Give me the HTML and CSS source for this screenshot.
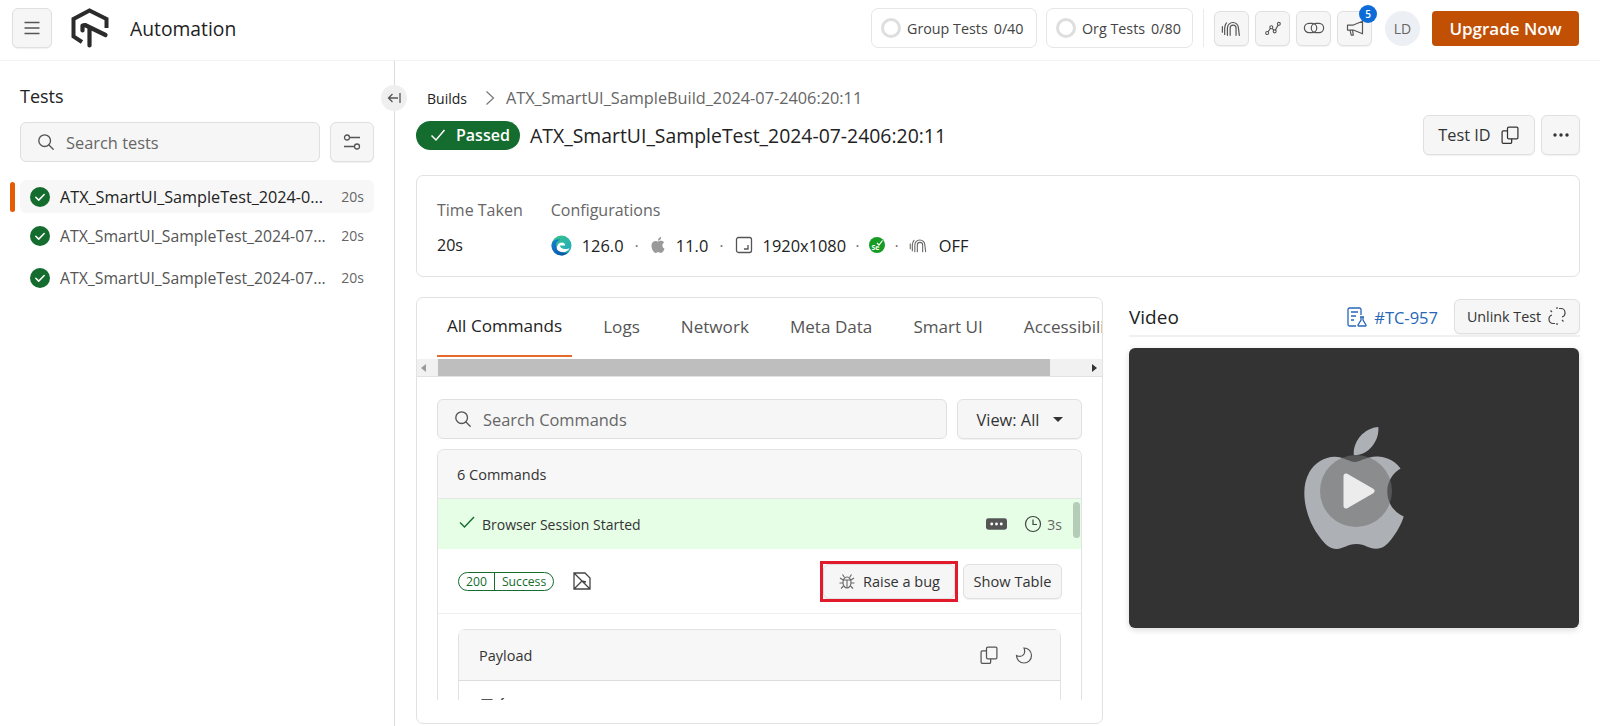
FILE: index.html
```html
<!DOCTYPE html>
<html lang="en">
<head>
<meta charset="utf-8">
<title>Automation</title>
<link rel="stylesheet" href="styles.css">
</head>
<body>
<svg class="defs" width="0" height="0" aria-hidden="true">
  <defs>
    <symbol id="i-tunnel" viewBox="0 0 24 24"><path d="M7 20v-8a6 6 0 0 1 12 0l1 8M10 20v-8a3.200 3.200 0 0 1 6.400 0v8M4 19v-7a9 9 0 0 1 2-5.500M1.500 10.500v6" fill="none" stroke="currentColor" stroke-width="1.300" stroke-linecap="round"/></symbol>
    <symbol id="i-copy" viewBox="0 0 24 24"><rect x="9" y="2.500" width="12.500" height="14" rx="1.500" fill="none" stroke="currentColor" stroke-width="1.500"/><path d="M9 7H4a1.500 1.500 0 0 0-1.500 1.500v12A1.500 1.500 0 0 0 4 22h8.500a1.500 1.500 0 0 0 1.500-1.500v-4" fill="none" stroke="currentColor" stroke-width="1.500"/></symbol>
    <symbol id="i-apple" viewBox="0 0 24 24"><path fill="currentColor" d="M12.152 6.896c-.948 0-2.415-1.078-3.96-1.04-2.04.027-3.91 1.183-4.961 3.014-2.117 3.675-.546 9.103 1.519 12.09 1.013 1.454 2.208 3.09 3.792 3.039 1.52-.065 2.09-.987 3.935-.987 1.831 0 2.35.987 3.96.948 1.637-.026 2.676-1.48 3.676-2.948 1.156-1.688 1.636-3.325 1.662-3.415-.039-.013-3.182-1.221-3.22-4.857-.026-3.04 2.48-4.494 2.597-4.559-1.429-2.09-3.623-2.324-4.39-2.376-2-.156-3.675 1.09-4.61 1.09zM15.530 3.830c.843-1.012 1.400-2.427 1.245-3.830-1.207.052-2.662.805-3.532 1.818-.78.896-1.454 2.338-1.273 3.714 1.338.104 2.715-.688 3.559-1.701"/></symbol>
    <symbol id="i-check" viewBox="0 0 20 20"><circle cx="10" cy="10" r="10" fill="#146c2e"/><path d="M5.800 10.300l2.900 2.800 5.500-5.600" fill="none" stroke="#fff" stroke-width="1.500" stroke-linecap="round" stroke-linejoin="round"/></symbol>
    <symbol id="i-search" viewBox="0 0 20 20"><circle cx="8.500" cy="8.500" r="6.500" fill="none" stroke="currentColor" stroke-width="1.500"/><path d="M13.300 13.300L18 18" fill="none" stroke="currentColor" stroke-width="1.500" stroke-linecap="round"/></symbol>
  </defs>
</svg>

<header class="topbar">
  <button class="btn menu-btn" aria-label="Menu">
    <svg class="ic16" viewBox="0 0 16 16"><path d="M0.500 2.500h15M0.500 8h15M0.500 13.500h15" fill="none" stroke="#555" stroke-width="1.300"/></svg>
  </button>
  <svg class="logo" viewBox="0 0 38 40" aria-label="Logo">
    <path d="M11 34L2.500 28.500V11L18.500 2.500L35.500 11V20" fill="none" stroke="#2b2b2b" stroke-width="4" stroke-linejoin="miter"/>
    <path d="M18.500 37.500V19M11.500 22.500V17.500L14 17L34.500 27" fill="none" stroke="#2b2b2b" stroke-width="4.200" stroke-linecap="round" stroke-linejoin="round"/>
  </svg>
  <span class="app-name">Automation</span>
  <div class="topbar-right">
    <div class="quota quota-group"><span class="ring"></span><span>Group Tests</span><span>0/40</span></div>
    <div class="quota quota-org"><span class="ring"></span><span>Org Tests</span><span>0/80</span></div>
    <span class="vsep"></span>
    <button class="btn tool-btn" aria-label="Tunnel"><svg class="ic22"><use href="#i-tunnel"/></svg></button>
    <button class="btn tool-btn" aria-label="Analytics">
      <svg class="ic20" viewBox="0 0 24 24"><path d="M5 18l5-7 4 5 5-9" fill="none" stroke="#555" stroke-width="1.400"/><circle cx="5" cy="18" r="1.800" fill="#fff" stroke="#555" stroke-width="1.300"/><circle cx="10" cy="11" r="1.800" fill="#fff" stroke="#555" stroke-width="1.300"/><circle cx="14" cy="16" r="1.800" fill="#fff" stroke="#555" stroke-width="1.300"/><circle cx="19" cy="7" r="1.800" fill="#fff" stroke="#555" stroke-width="1.300"/></svg>
    </button>
    <button class="btn tool-btn" aria-label="Integrations">
      <svg class="ic22" viewBox="0 0 24 24"><rect x="1.500" y="7" width="13.500" height="10" rx="5" fill="none" stroke="#555" stroke-width="1.300"/><rect x="9" y="7" width="13.500" height="10" rx="5" fill="none" stroke="#555" stroke-width="1.300"/></svg>
    </button>
    <button class="btn tool-btn notify" aria-label="Announcements">
      <svg class="ic20" viewBox="0 0 24 24"><path d="M3 8.500h7L21 4v15l-11-4.500H3zM6 14.500l1.500 6H10l-1-6" fill="none" stroke="#555" stroke-width="1.400" stroke-linejoin="round"/></svg>
      <span class="badge">5</span>
    </button>
    <span class="avatar">LD</span>
    <button class="upgrade">Upgrade Now</button>
  </div>
</header>

<main class="layout">
  <aside class="sidebar">
    <button class="collapse" aria-label="Collapse">
      <svg viewBox="0 0 14 12" width="14" height="12"><path d="M11 6H1.500M5.500 2L1.500 6l4 4M13 1v10" fill="none" stroke="#555" stroke-width="1.300"/></svg>
    </button>
    <h2 class="side-title">Tests</h2>
    <div class="side-tools">
      <div class="search-box side-search">
        <svg class="ic18"><use href="#i-search"/></svg>
        <span>Search tests</span>
      </div>
      <button class="btn filter-btn" aria-label="Filter">
        <svg class="ic18" viewBox="0 0 18 18"><path d="M7 4.500h10M1 13.500h10" fill="none" stroke="#555" stroke-width="1.300"/><circle cx="4" cy="4.500" r="2.500" fill="none" stroke="#555" stroke-width="1.300"/><circle cx="14" cy="13.500" r="2.500" fill="none" stroke="#555" stroke-width="1.300"/></svg>
      </button>
    </div>
    <ul class="test-list">
      <li class="test-item active"><svg class="ic20"><use href="#i-check"/></svg><span class="test-name">ATX_SmartUI_SampleTest_2024-0...</span><span class="test-time">20s</span></li>
      <li class="test-item"><svg class="ic20"><use href="#i-check"/></svg><span class="test-name">ATX_SmartUI_SampleTest_2024-07...</span><span class="test-time">20s</span></li>
      <li class="test-item"><svg class="ic20"><use href="#i-check"/></svg><span class="test-name">ATX_SmartUI_SampleTest_2024-07...</span><span class="test-time">20s</span></li>
    </ul>
  </aside>

  <section class="content">
    <nav class="crumbs">
      <span class="crumb-root">Builds</span>
      <svg class="crumb-sep" viewBox="0 0 10 16"><path d="M1.500 1.500L8.500 8l-7 6.500" fill="none" stroke="#777" stroke-width="1.200"/></svg>
      <span class="crumb-leaf">ATX_SmartUI_SampleBuild_2024-07-2406:20:11</span>
    </nav>
    <div class="title-row">
      <span class="pill">
        <svg viewBox="0 0 16 14" width="16" height="14"><path d="M1.500 7.500l4.500 4.500L14.500 2" fill="none" stroke="#fff" stroke-width="1.500"/></svg>
        Passed
      </span>
      <h1 class="title">ATX_SmartUI_SampleTest_2024-07-2406:20:11</h1>
      <button class="btn testid-btn">Test ID <svg class="ic20"><use href="#i-copy"/></svg></button>
      <button class="btn more-btn" aria-label="More">
        <svg viewBox="0 0 18 4" width="18" height="4"><circle cx="3" cy="2" r="1.700" fill="#333"/><circle cx="9" cy="2" r="1.700" fill="#333"/><circle cx="15" cy="2" r="1.700" fill="#333"/></svg>
      </button>
    </div>

    <div class="info-card">
      <div class="info-col">
        <span class="info-label">Time Taken</span>
        <span class="info-value">20s</span>
      </div>
      <div class="info-col">
        <span class="info-label">Configurations</span>
        <div class="config">
          <svg class="ic20 cfg-edge" viewBox="0 0 20 20">
            <defs>
              <linearGradient id="edgeA" x1="0" y1="0" x2="1" y2="1"><stop offset="0" stop-color="#39c481"/><stop offset="1" stop-color="#1fa8c9"/></linearGradient>
              <linearGradient id="edgeB" x1="0" y1="0" x2="1" y2="1"><stop offset="0" stop-color="#1783d4"/><stop offset="1" stop-color="#0b4f9e"/></linearGradient>
            </defs>
            <circle cx="10" cy="10" r="9.500" fill="url(#edgeA)"/>
            <path d="M0.500 10C1 5 5 3.500 9 4.500c-4 1-5 4-3.500 7.500 1.500 4 6.500 6 11 4.500-1.800 2-4 3-6.500 3-5.500 0-9.500-4.500-9.500-9.500z" fill="url(#edgeB)"/>
            <path d="M6.500 9.500c1-3 7-3.500 7 .5H8.500c.5 3 4 4.500 9 2.500-1 3.500-7 5-10.500 2.500-2-1.500-2-3.500-.5-5.500z" fill="#fff"/>
          </svg>
          <span>126.0</span><span class="dot">·</span>
          <svg class="ic16 cfg-apple"><use href="#i-apple"/></svg>
          <span>11.0</span><span class="dot">·</span>
          <svg class="ic18" viewBox="0 0 18 18"><rect x="1.500" y="1.500" width="15" height="15" rx="2" fill="none" stroke="#555" stroke-width="1.300"/><path d="M13 9v4H9" fill="none" stroke="#555" stroke-width="1.300"/></svg>
          <span>1920x1080</span><span class="dot dot-tight">·</span>
          <svg class="ic16 cfg-se" viewBox="0 0 16 16"><circle cx="8" cy="8" r="8" fill="#169c25"/><path d="M8 6l2 2 3.500-4.500" fill="none" stroke="#fff" stroke-width="1.200"/><text class="se-mark" x="2.500" y="12.500">Se</text></svg>
          <span class="dot dot-tight">·</span>
          <svg class="ic20 tunnel-gray"><use href="#i-tunnel"/></svg>
          <span>OFF</span>
        </div>
      </div>
    </div>

    <div class="panels">
      <div class="panel-left">
        <div class="tabs">
          <span class="tab active">All Commands</span>
          <span class="tab">Logs</span>
          <span class="tab">Network</span>
          <span class="tab">Meta Data</span>
          <span class="tab">Smart UI</span>
          <span class="tab">Accessibility</span>
        </div>
        <div class="hscroll">
          <span class="arrow-l"></span>
          <span class="thumb"></span>
          <span class="arrow-r"></span>
        </div>
        <div class="panel-body">
          <div class="cmd-tools">
            <div class="search-box cmd-search">
              <svg class="ic18"><use href="#i-search"/></svg>
              <span>Search Commands</span>
            </div>
            <button class="btn view-btn">View: All <span class="caret"></span></button>
          </div>
          <div class="cmd-box">
            <div class="cmd-head">6 Commands</div>
            <div class="cmd-row">
              <svg class="cmd-check" viewBox="0 0 16 12" width="16" height="12"><path d="M1 6.500L5.500 11 15 1" fill="none" stroke="#146c2e" stroke-width="1.400"/></svg>
              <span class="cmd-name">Browser Session Started</span>
              <svg class="term" viewBox="0 0 22 12" width="21" height="12"><rect width="22" height="12" rx="2.500" fill="#555"/><circle cx="6" cy="6" r="1.500" fill="#fff"/><circle cx="11" cy="6" r="1.500" fill="#fff"/><circle cx="16" cy="6" r="1.500" fill="#fff"/></svg>
              <svg class="ic18 clock" viewBox="0 0 18 18"><circle cx="9" cy="9" r="7.500" fill="none" stroke="#444" stroke-width="1.200"/><path d="M9 4.500V9.500H13" fill="none" stroke="#444" stroke-width="1.200"/></svg>
              <span class="cmd-time">3s</span>
              <span class="vthumb"></span>
            </div>
            <div class="cmd-detail">
              <span class="status"><span class="status-code">200</span><span class="status-text">Success</span></span>
              <svg class="noshot" viewBox="0 0 20 20" width="20" height="20"><path d="M2 2h11l5 5v11H2zM2 2l16 16M2 18l8-8 4 1" fill="none" stroke="#444" stroke-width="1.300"/></svg>
              <button class="btn bug-btn">
                <svg class="ic18" viewBox="0 0 18 18"><ellipse cx="9" cy="10.500" rx="4" ry="5.500" fill="none" stroke="#666" stroke-width="1.100"/><path d="M5 8h8M9 8v8M6.500 5.500l-2-3M11.500 5.500l2-3M5 8L2 6M13 8l3-2M5 11H1.500M13 11h3.500M5.500 14L3 16.500M12.500 14l2.500 2.500" fill="none" stroke="#666" stroke-width="1.100"/></svg>
                Raise a bug
              </button>
              <button class="btn table-btn">Show Table</button>
            </div>
            <div class="payload-wrap">
              <div class="payload">
                <div class="payload-head">
                  <span>Payload</span>
                  <svg class="ic20 pay-copy"><use href="#i-copy"/></svg>
                  <svg class="ic18 pay-moon" viewBox="0 0 18 18"><path d="M9 2a7.500 7.500 0 1 1-7.500 7.500c3 1.500 6 1 7.500-1.500 1-2 .8-4 0-6z" fill="none" stroke="#555" stroke-width="1.200"/></svg>
                </div>
                <div class="payload-body"><span class="tree-caret"></span><span>{</span></div>
              </div>
            </div>
          </div>
        </div>
      </div>

      <div class="panel-right">
        <div class="video-head">
          <h3 class="video-title">Video</h3>
          <svg class="tc-icon" viewBox="0 0 20 20" width="20" height="20"><path d="M14 8V2.500A1.500 1.500 0 0 0 12.500 1h-10A1.500 1.500 0 0 0 1 2.500v15A1.500 1.500 0 0 0 2.500 19H9" fill="none" stroke="#2767b8" stroke-width="1.300"/><path d="M4 5h7M4 9h5M4 13h3" stroke="#2767b8" stroke-width="1.300"/><path d="M13 10h4M14 10v3l-3 5a.7.700 0 0 0 .6 1h6.800a.7.700 0 0 0 .6-1l-3-5v-3" fill="none" stroke="#2767b8" stroke-width="1.300"/></svg>
          <span class="tc-id">#TC-957</span>
          <button class="btn unlink-btn">Unlink Test
            <svg class="ic20" viewBox="0 0 20 20"><path d="M12 2.500h2a4 4 0 0 1 4 4v1a4 4 0 0 1-3 3.500M8 17.500H6a4 4 0 0 1-4-4v-1a4 4 0 0 1 3-3.500M10 1v2M10 17v2M3.500 4.500l1.500 1.500M15 14l1.500 1.500" fill="none" stroke="#444" stroke-width="1.200"/></svg>
          </button>
        </div>
        <div class="video">
          <svg class="video-apple"><use href="#i-apple"/></svg>
          <span class="play">
            <svg viewBox="0 0 32 38" width="32" height="38"><path d="M3 4l26 15L3 34z" fill="#ececec" stroke="#ececec" stroke-width="5" stroke-linejoin="round"/></svg>
          </span>
        </div>
      </div>
    </div>
  </section>
</main>
</body>
</html>
```
FILE: styles.css
```css
* { box-sizing: border-box; }
html, body { margin: 0; height: 100%; }
body {
  display: flex;
  flex-direction: column;
  height: 726px;
  overflow: hidden;
  background: #fff;
  color: #222;
  font-family: "Open Sans", "Noto Sans", "Liberation Sans", sans-serif;
  font-size: 15px;
}
.defs { position: absolute; }
h1, h2, h3 { margin: 0; font-weight: 400; }
ul { list-style: none; margin: 0; padding: 0; }
button { font: inherit; color: inherit; cursor: pointer; }
svg { flex: none; display: block; }

.ic16 { width: 16px; height: 16px; }
.ic18 { width: 18px; height: 18px; color: #555; }
.ic20 { width: 20px; height: 20px; }
.ic22 { width: 22px; height: 22px; }

.btn {
  display: inline-flex;
  align-items: center;
  justify-content: center;
  padding: 0;
  background: #f6f6f6;
  border: 1px solid #e0e0e0;
  border-radius: 6px;
  box-shadow: 0 1px 1px rgba(0, 0, 0, .06);
}

/* top bar */
.topbar {
  flex: none;
  display: flex;
  align-items: center;
  height: 61px;
  padding: 0 21px 4px 12px;
  border-bottom: 1px solid #f3f3f3;
}
.menu-btn { width: 40px; height: 40px; margin-right: 19px; }
.logo { width: 38px; height: 40px; margin-right: 21px; }
.app-name { font-size: 19.300px; color: #222; }
.topbar-right { display: flex; align-items: center; margin-left: auto; }
.quota {
  display: flex;
  align-items: center;
  gap: 6px;
  height: 40px;
  padding: 0 9px;
  background: #fff;
  border: 1px solid #e6e6e6;
  border-radius: 7px;
  font-size: 14.300px;
  color: #444;
  white-space: nowrap;
}
.quota-group { width: 166px; margin-right: 9px; }
.quota-org { width: 147px; }
.ring { width: 20px; height: 20px; border: 3px solid #dedede; border-radius: 50%; }
.vsep { width: 1px; height: 38px; margin: 0 10px; background: #eaeaea; }
.tool-btn { position: relative; width: 35px; height: 35px; color: #555; margin-right: 6px; }
.badge {
  position: absolute;
  top: -7px;
  right: -6px;
  width: 18px;
  height: 18px;
  border-radius: 50%;
  background: #0c6bd6;
  color: #fff;
  font-size: 10px;
  font-weight: 600;
  line-height: 18px;
  text-align: center;
}
.notify { margin-right: 13px; }
.avatar {
  display: flex;
  align-items: center;
  justify-content: center;
  width: 35px;
  height: 35px;
  margin-right: 12px;
  border-radius: 50%;
  background: #eceff3;
  color: #666;
  font-size: 14px;
}
.upgrade {
  width: 147px;
  height: 35px;
  padding: 0;
  border: 0;
  border-radius: 4px;
  background: #c14f04;
  color: #fff;
  font-size: 17px;
  font-weight: 600;
}

/* layout */
.layout { flex: 1; display: flex; min-height: 0; }
.sidebar {
  position: relative;
  flex: none;
  width: 395px;
  padding: 23px 20px 0 20px;
  border-right: 1px solid #dcdcdc;
}
.collapse {
  position: absolute;
  top: 24px;
  right: -13px;
  display: flex;
  align-items: center;
  justify-content: center;
  width: 26px;
  height: 26px;
  padding: 0;
  border: 0;
  border-radius: 50%;
  background: #efefef;
}
.side-title { font-size: 18px; line-height: 24px; color: #222; }
.side-tools { display: flex; gap: 10px; margin-top: 14px; }
.search-box {
  display: flex;
  align-items: center;
  height: 40px;
  background: #f6f6f6;
  border: 1px solid #dfdfdf;
  border-radius: 6px;
  color: #666;
  font-size: 16.400px;
}
.side-search { flex: 1; gap: 11px; padding-left: 16px; }
.filter-btn { width: 44px; height: 40px; }
.test-list { position: relative; margin-top: 18px; }
.test-item {
  position: relative;
  display: flex;
  align-items: center;
  gap: 10px;
  height: 33px;
  margin-bottom: 9px;
  padding: 0 10px;
  color: #555;
  font-size: 15.800px;
  white-space: nowrap;
}
.test-item.active { margin-bottom: 6px; background: #f7f7f7; border-radius: 6px; color: #222; font-size: 16.200px; }
.test-item.active::before {
  content: "";
  position: absolute;
  left: -10px;
  top: 2px;
  width: 5px;
  height: 30px;
  border-radius: 3px;
  background: #e65c00;
}
.test-name { flex: 1; min-width: 0; }
.test-time { color: #666; font-size: 14px; }

/* content */
.content { flex: 1; min-width: 0; padding: 27px 20px 0 21px; }
.crumbs { display: flex; align-items: center; height: 20px; padding-left: 11px; font-size: 14px; }
.crumb-root { color: #222; }
.crumb-sep { width: 10px; height: 16px; margin: 0 11px 0 18px; }
.crumb-leaf { color: #666; font-size: 16.300px; }
.title-row { display: flex; align-items: center; height: 40px; margin-top: 7px; }
.pill {
  display: flex;
  align-items: center;
  gap: 10px;
  width: 104px;
  height: 29px;
  padding-left: 14px;
  border-radius: 15px;
  background: #146c2e;
  color: #fff;
  font-size: 16px;
  font-weight: 600;
}
.title { flex: 1; margin-left: 10px; font-size: 19.400px; color: #222; }
.testid-btn { gap: 9px; width: 112px; height: 40px; font-size: 16.300px; color: #333; }
.more-btn { width: 39px; height: 40px; margin-left: 6px; }

.info-card {
  display: flex;
  gap: 28px;
  height: 102px;
  margin-top: 20px;
  padding: 22px 20px 0;
  border: 1px solid #e2e2e2;
  border-radius: 7px;
}
.info-col { display: flex; flex-direction: column; gap: 11px; }
.info-label { color: #666; font-size: 16px; line-height: 24px; }
.info-value { font-size: 16px; line-height: 24px; }
.config { display: flex; align-items: center; height: 24px; gap: 10px; font-size: 16.400px; }
.cfg-edge { width: 21px; height: 21px; }
.dot { color: #777; margin: 0 1px; }
.dot-tight { margin: 0 0 0 -1px; }
.cfg-apple { color: #9a9a9a; }
.tunnel-gray { color: #666; }
.se-mark { fill: #fff; font-size: 7px; font-weight: 700; }

.panels { display: flex; gap: 26px; margin-top: 20px; }
.panel-left {
  flex: none;
  width: 687px;
  height: 427px;
  overflow: hidden;
  border: 1px solid #e2e2e2;
  border-radius: 7px;
}
.tabs { display: flex; gap: 21px; height: 61px; padding-left: 20px; overflow: hidden; white-space: nowrap; }
.tab {
  flex: none;
  display: flex;
  align-items: center;
  height: 59px;
  padding: 0 10px 2px;
  color: #555;
  font-size: 17.100px;
}
.tab.active { color: #222; border-bottom: 2px solid #e56a2c; }
.hscroll { display: flex; align-items: center; height: 18px; background: #f1f1f1; border-bottom: 1px solid #e2e2e2; padding-left: 4px; }
.arrow-l { width: 0; height: 0; border: 4px solid transparent; border-left: 0; border-right: 5px solid #9a9a9a; }
.thumb { width: 612px; height: 17px; margin-left: 12px; background: #bebebe; }
.arrow-r { width: 0; height: 0; margin-left: auto; margin-right: 5px; border: 4px solid transparent; border-right: 0; border-left: 5px solid #333; }
.panel-body { padding: 22px 20px 0; }
.cmd-tools { display: flex; gap: 10px; }
.cmd-search { flex: 1; gap: 11px; padding-left: 16px; }
.view-btn { gap: 10px; width: 125px; height: 40px; font-size: 16.400px; color: #333; }
.caret { width: 0; height: 0; margin-left: 3px; border: 5px solid transparent; border-top: 5px solid #333; border-bottom: 0; }
.cmd-box {
  height: 251px;
  margin-top: 10px;
  overflow: hidden;
  border: 1px solid #e2e2e2;
  border-bottom: 0;
  border-radius: 7px 7px 0 0;
}
.cmd-head {
  display: flex;
  align-items: center;
  height: 49px;
  padding-left: 19px;
  background: #f7f7f7;
  border-bottom: 1px solid #e6e6e6;
  font-size: 14.500px;
  color: #333;
}
.cmd-row {
  position: relative;
  display: flex;
  align-items: center;
  height: 50px;
  padding: 0 19px 0 21px;
  background: #e6fde6;
  font-size: 14px;
  color: #333;
}
.cmd-check { margin-right: 7px; margin-top: -4px; }
.cmd-name { flex: 1; }
.term { margin-right: 17px; }
.clock { margin-right: 5px; }
.cmd-time { color: #666; }
.vthumb { position: absolute; top: 3px; right: 1px; width: 7px; height: 36px; border-radius: 4px; background: #b5cdb8; }
.cmd-detail {
  display: flex;
  align-items: center;
  height: 65px;
  padding: 0 19px 0 20px;
  border-bottom: 1px solid #eee;
}
.status {
  display: flex;
  align-items: center;
  height: 19px;
  border: 1px solid #146c2e;
  border-radius: 10px;
  color: #146c2e;
  font-size: 12.200px;
}
.status-code { padding: 0 7px; border-right: 1px solid #146c2e; line-height: 17px; }
.status-text { padding: 0 7px; }
.noshot { margin-left: 18px; margin-right: auto; }
.bug-btn {
  position: relative;
  gap: 7px;
  width: 132px;
  height: 35px;
  margin-right: 8px;
  font-size: 14.500px;
  color: #333;
}
.bug-btn::after {
  content: "";
  position: absolute;
  inset: -4px;
  border: 3.500px solid #e21b2c;
}
.table-btn { width: 99px; height: 35px; font-size: 14.600px; color: #333; }
.payload-wrap { padding: 15px 20px 0; }
.payload { border: 1px solid #e2e2e2; border-radius: 7px 7px 0 0; }
.payload-head {
  display: flex;
  align-items: center;
  height: 51px;
  padding-left: 20px;
  background: #f7f7f7;
  border-bottom: 1px solid #dcdcdc;
  font-size: 14.500px;
  color: #333;
}
.payload-head span { flex: 1; }
.pay-copy { color: #555; margin-right: 16px; }
.pay-moon { margin-right: 27px; }
.payload-body { display: flex; align-items: center; gap: 6px; padding: 12px 22px; font-size: 14px; }
.tree-caret { width: 0; height: 0; border: 6px solid transparent; border-top: 7px solid #555; border-bottom: 0; }

.panel-right { flex: 1; min-width: 0; }
.video-head {
  display: flex;
  align-items: center;
  height: 38px;
  margin-top: 2px;
  border-bottom: 2px solid #f0f0f0;
}
.video-title { flex: 1; font-size: 19px; color: #222; }
.tc-icon { margin-right: 7px; }
.tc-id { margin-right: 16px; font-size: 16.500px; color: #2767b8; }
.unlink-btn { gap: 6px; width: 126px; height: 35px; margin-bottom: 2px; font-size: 14.300px; color: #333; }
.video {
  position: relative;
  display: flex;
  align-items: center;
  justify-content: center;
  height: 280px;
  margin-top: 11px;
  width: 450px;
  border-radius: 6px;
  background: #333;
  box-shadow: 0 2px 6px rgba(0, 0, 0, .15);
}
.video-apple { width: 122px; height: 122px; color: #adb0b5; }
.play {
  position: absolute;
  left: 191px;
  top: 107px;
  display: flex;
  align-items: center;
  justify-content: center;
  width: 72px;
  height: 72px;
  padding-left: 5px;
  border-radius: 50%;
  background: rgba(112, 112, 112, .56);
}
```
